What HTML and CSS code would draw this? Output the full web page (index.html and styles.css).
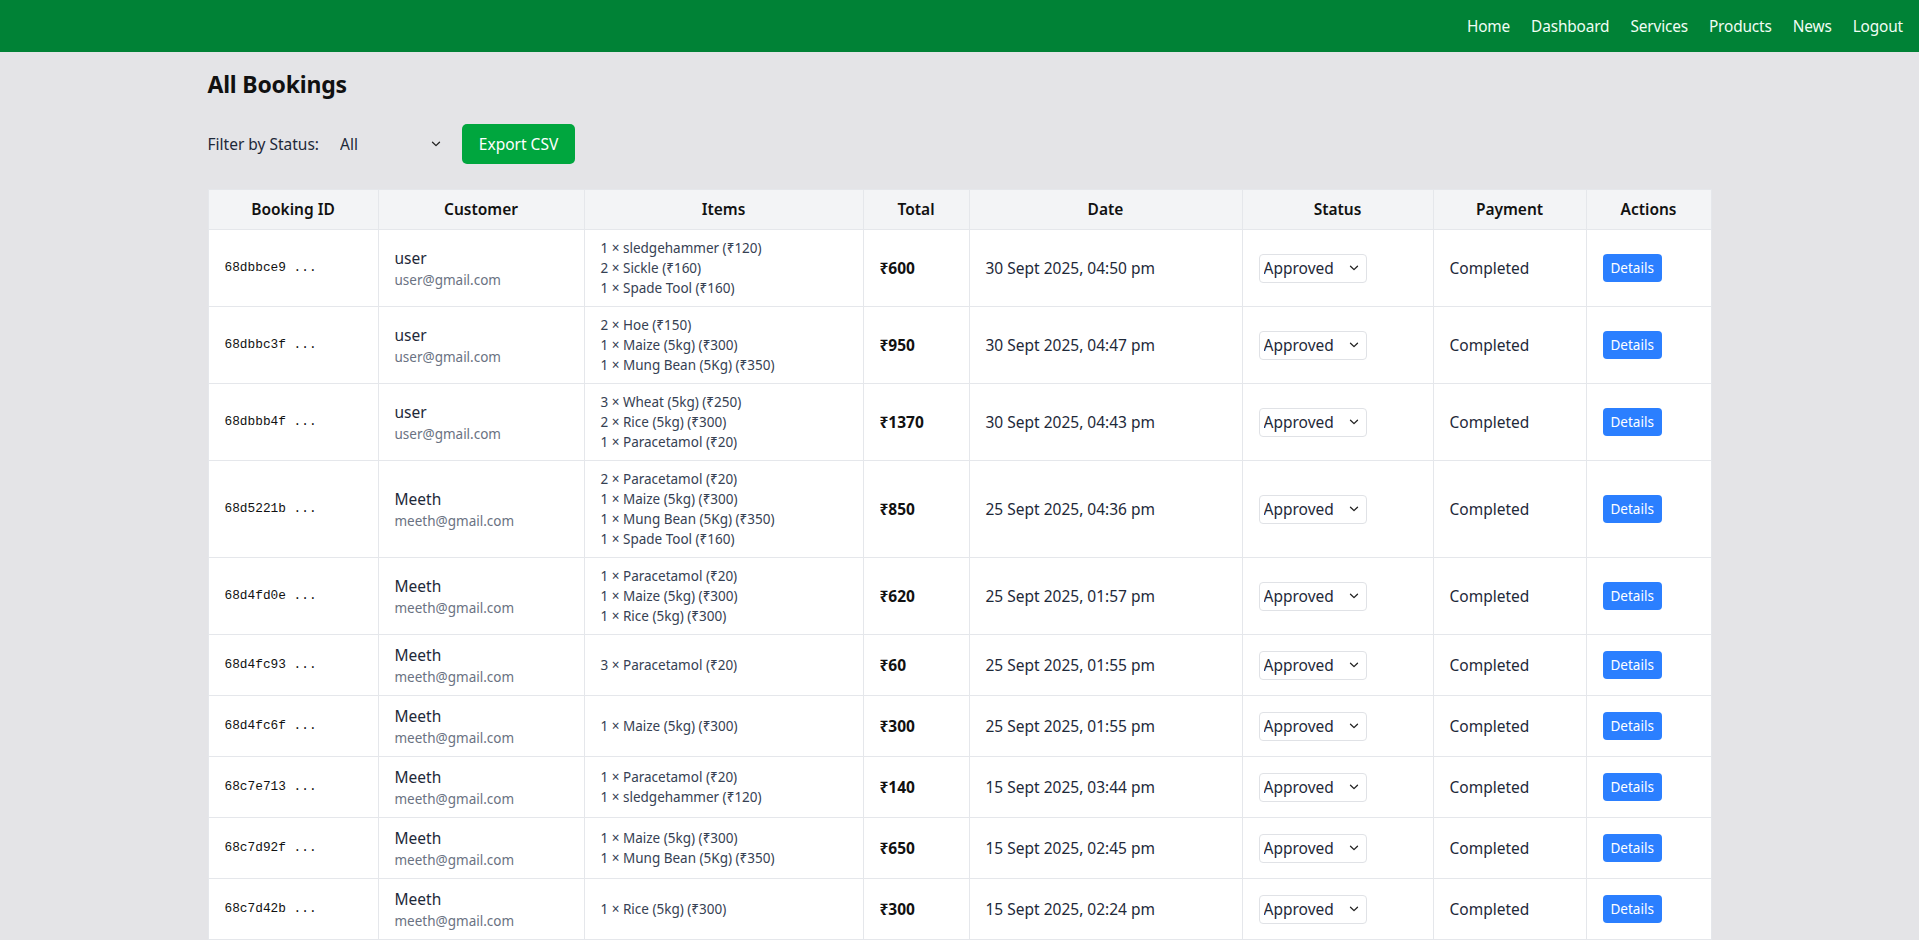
FILE: index.html
```html
<!DOCTYPE html>
<html lang="en">
<head>
<meta charset="utf-8">
<title>All Bookings</title>
<link rel="stylesheet" href="styles.css">
</head>
<body>
<nav class="navbar">
  <div class="nav-brand"></div>
  <ul class="nav-links">
    <li><a href="#">Home</a></li>
    <li><a href="#">Dashboard</a></li>
    <li><a href="#">Services</a></li>
    <li><a href="#">Products</a></li>
    <li><a href="#">News</a></li>
    <li><a href="#">Logout</a></li>
  </ul>
</nav>

<main class="container">
  <h1 class="page-title">All Bookings</h1>

  <div class="toolbar">
    <label class="filter-label" for="status-filter">Filter by Status:</label>
    <span class="select-wrap filter-select-wrap">
      <select id="status-filter" class="filter-select">
        <option>All</option>
        <option>Pending</option>
        <option>Approved</option>
        <option>Rejected</option>
      </select>
      <svg class="chevron" width="10" height="6" viewBox="0 0 10 6"><path d="M1.5 1.2 5 4.6 8.5 1.2" fill="none" stroke="#222" stroke-width="1.3" stroke-linecap="round" stroke-linejoin="round"/></svg>
    </span>
    <button class="btn-export">Export CSV</button>
  </div>

  <table class="bookings">
    <colgroup>
      <col class="c-id"><col class="c-cust"><col class="c-items"><col class="c-total"><col class="c-date"><col class="c-status"><col class="c-pay"><col class="c-act">
    </colgroup>
    <thead>
      <tr>
        <th>Booking ID</th><th>Customer</th><th>Items</th><th>Total</th><th>Date</th><th>Status</th><th>Payment</th><th>Actions</th>
      </tr>
    </thead>
    <tbody id="rows"></tbody>
  </table>
</main>
<script src="script.js"></script>
</body>
</html>
```

FILE: script.js
```js
const data = [
  ["68dbbce9", "user", "user@gmail.com", ["1 × sledgehammer (₹120)", "2 × Sickle (₹160)", "1 × Spade Tool (₹160)"], "₹600", "30 Sept 2025, 04:50 pm"],
  ["68dbbc3f", "user", "user@gmail.com", ["2 × Hoe (₹150)", "1 × Maize (5kg) (₹300)", "1 × Mung Bean (5Kg) (₹350)"], "₹950", "30 Sept 2025, 04:47 pm"],
  ["68dbbb4f", "user", "user@gmail.com", ["3 × Wheat (5kg) (₹250)", "2 × Rice (5kg) (₹300)", "1 × Paracetamol (₹20)"], "₹1370", "30 Sept 2025, 04:43 pm"],
  ["68d5221b", "Meeth", "meeth@gmail.com", ["2 × Paracetamol (₹20)", "1 × Maize (5kg) (₹300)", "1 × Mung Bean (5Kg) (₹350)", "1 × Spade Tool (₹160)"], "₹850", "25 Sept 2025, 04:36 pm"],
  ["68d4fd0e", "Meeth", "meeth@gmail.com", ["1 × Paracetamol (₹20)", "1 × Maize (5kg) (₹300)", "1 × Rice (5kg) (₹300)"], "₹620", "25 Sept 2025, 01:57 pm"],
  ["68d4fc93", "Meeth", "meeth@gmail.com", ["3 × Paracetamol (₹20)"], "₹60", "25 Sept 2025, 01:55 pm"],
  ["68d4fc6f", "Meeth", "meeth@gmail.com", ["1 × Maize (5kg) (₹300)"], "₹300", "25 Sept 2025, 01:55 pm"],
  ["68c7e713", "Meeth", "meeth@gmail.com", ["1 × Paracetamol (₹20)", "1 × sledgehammer (₹120)"], "₹140", "15 Sept 2025, 03:44 pm"],
  ["68c7d92f", "Meeth", "meeth@gmail.com", ["1 × Maize (5kg) (₹300)", "1 × Mung Bean (5Kg) (₹350)"], "₹650", "15 Sept 2025, 02:45 pm"],
  ["68c7d42b", "Meeth", "meeth@gmail.com", ["1 × Rice (5kg) (₹300)"], "₹300", "15 Sept 2025, 02:24 pm"]
];

const chevron = '<svg class="chevron" width="10" height="6" viewBox="0 0 10 6"><path d="M1.5 1.2 5 4.6 8.5 1.2" fill="none" stroke="#222" stroke-width="1.3" stroke-linecap="round" stroke-linejoin="round"/></svg>';

const tbody = document.getElementById("rows");
tbody.innerHTML = data.map(([id, name, email, items, total, date]) => `
  <tr>
    <td class="cell-id">${id} ...</td>
    <td><div class="cust-name">${name}</div><div class="cust-email">${email}</div></td>
    <td class="cell-items">${items.map(i => `<div>${i}</div>`).join("")}</td>
    <td class="cell-total">${total}</td>
    <td>${date}</td>
    <td><span class="select-wrap status-wrap"><select class="status-select"><option>Approved</option><option>Pending</option><option>Rejected</option></select>${chevron}</span></td>
    <td>Completed</td>
    <td><button class="btn-details">Details</button></td>
  </tr>`).join("");
```

FILE: styles.css
```css
* { box-sizing: border-box; }

html, body {
  margin: 0;
  padding: 0;
}

body {
  background: #e4e4e7;
  font-family: "Noto Sans", "Open Sans", sans-serif;
  color: #1e2939;
  font-size: 16px;
  line-height: 24px;
}

.navbar {
  height: 52px;
  background: #008236;
  display: flex;
  align-items: center;
  justify-content: space-between;
  padding: 0 16px 0 16px;
}

.nav-links {
  list-style: none;
  margin: 0;
  padding: 0;
  display: flex;
  gap: 21px;
}

.nav-links a {
  color: #f0fdf4;
  text-decoration: none;
  font-size: 15.4px;
  letter-spacing: -0.15px;
}

.container {
  max-width: 1536px;
  margin: 0 auto;
  padding: 16px 16px 0;
}

.page-title {
  margin: 0 0 24px;
  font-size: 23px;
  line-height: 32px;
  font-weight: 700;
  color: #111;
  letter-spacing: -0.2px;
}

.toolbar {
  display: flex;
  align-items: center;
  height: 40px;
  margin-bottom: 25px;
}

.filter-label {
  font-size: 15.5px;
  color: #1e2939;
  margin-right: 10px;
}

.select-wrap {
  position: relative;
  display: inline-block;
}

.select-wrap .chevron {
  position: absolute;
  top: 50%;
  margin-top: -3px;
  pointer-events: none;
}

.filter-select-wrap .chevron { right: 10px; }

.filter-select {
  appearance: none;
  -webkit-appearance: none;
  width: 122px;
  height: 34px;
  padding: 0 24px 0 10px;
  border: 1px solid transparent;
  background: transparent;
  font-family: inherit;
  font-size: 15.5px;
  color: #1e2939;
}

.btn-export {
  margin-left: 11px;
  height: 40px;
  width: 113px;
  padding: 0 12px;
  border: none;
  border-radius: 5px;
  background: #00a63e;
  color: #fff;
  font-family: inherit;
  font-size: 15.5px;
  cursor: pointer;
}

.bookings {
  width: 100%;
  border-collapse: collapse;
  background: #fff;
  table-layout: fixed;
}

.c-id { width: 170px; }
.c-cust { width: 206px; }
.c-items { width: 279px; }
.c-total { width: 106px; }
.c-date { width: 273px; }
.c-status { width: 191px; }
.c-pay { width: 153px; }
.c-act { width: 125px; }

.bookings th,
.bookings td {
  border: 1px solid #e5e7eb;
  padding: 8px 16px;
  vertical-align: middle;
}

.bookings th {
  background: #f3f4f6;
  font-weight: 600;
  font-size: 15.5px;
  color: #111;
  text-align: center;
  height: 40px;
  padding-top: 6px;
  padding-bottom: 8px;
}

.bookings td {
  text-align: left;
  font-size: 15.5px;
  color: #1e2939;
}

.bookings td.cell-id {
  font-family: "Liberation Mono", monospace;
  font-size: 12.8px;
  color: #111;
}

.cust-name {
  font-size: 15.5px;
  line-height: 24px;
  color: #1e2939;
}

.cust-email {
  font-size: 13.5px;
  line-height: 20px;
  color: #6a7282;
}

.bookings td.cell-items {
  font-size: 13.5px;
  line-height: 20px;
  color: #364153;
}

.bookings td.cell-total {
  font-weight: 700;
  color: #111;
}

.status-wrap .chevron { right: 8px; }

.status-select {
  appearance: none;
  -webkit-appearance: none;
  width: 108px;
  height: 29px;
  padding: 0 20px 0 4px;
  border: 1px solid #e0e2e6;
  border-radius: 4px;
  background: #fff;
  font-family: inherit;
  font-size: 15.5px;
  color: #1e2939;
  vertical-align: middle;
}

.btn-details {
  height: 28px;
  padding: 0 8px;
  border: none;
  border-radius: 4px;
  background: #2b7fff;
  color: #fff;
  font-family: inherit;
  font-size: 13.5px;
  cursor: pointer;
  vertical-align: middle;
}
```
